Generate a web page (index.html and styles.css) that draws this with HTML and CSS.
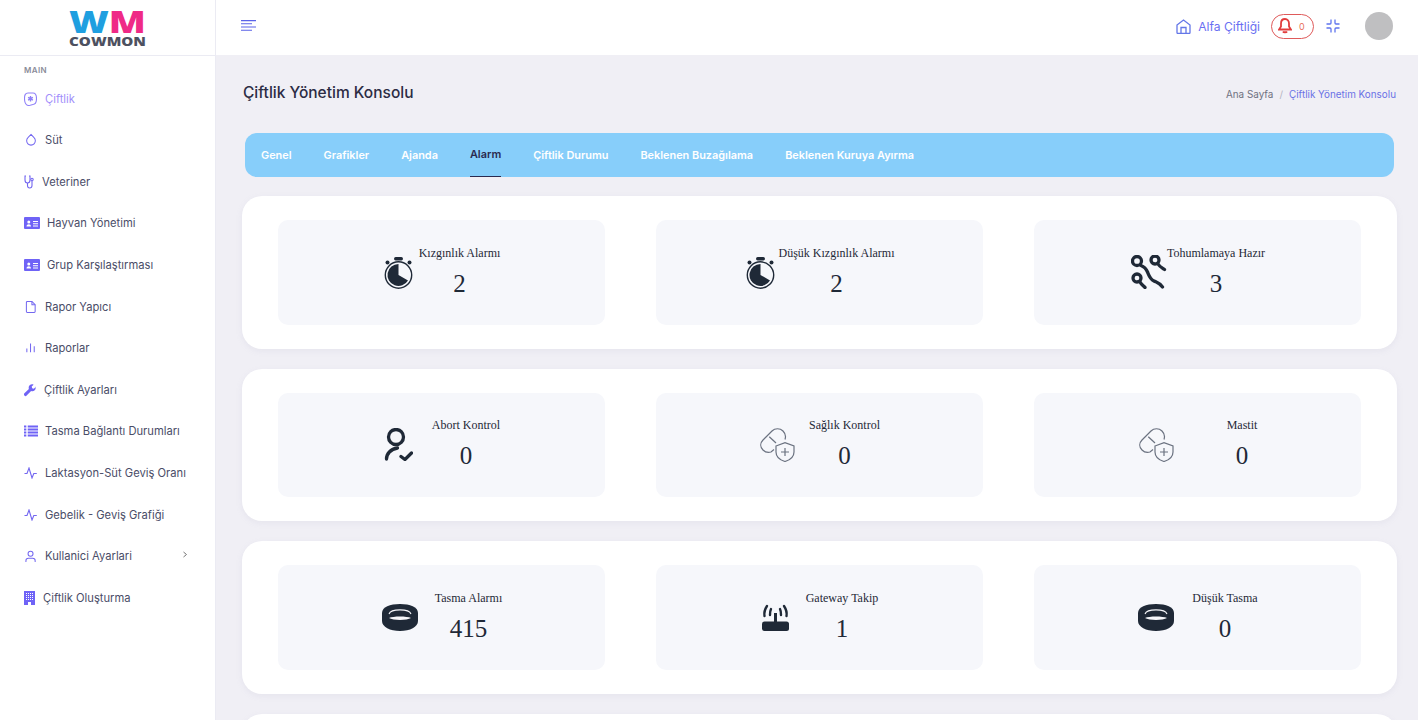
FILE: index.html
```html
<!DOCTYPE html>
<html lang="tr">
<head>
    <meta charset="UTF-8">
    <meta name="viewport" content="width=device-width, initial-scale=1.0">
    <title>Çiftlik Yönetim Konsolu</title>
    <link rel="stylesheet" href="styles.css">
</head>
<body>
<div class="wrapper">
    <!-- Sol menu -->
    <div class="sidebar">
        <div class="logo">
            <svg width="215" height="55" viewBox="0 0 215 55">
                <text class="logo-wm" x="69" y="33" textLength="77" lengthAdjust="spacingAndGlyphs"><tspan class="logo-w">W</tspan><tspan class="logo-m">M</tspan></text>
                <text class="logo-name" x="69" y="46" textLength="77" lengthAdjust="spacingAndGlyphs">COWMON</text>
            </svg>
        </div>
        <div class="menu-title">MAIN</div>
        <ul class="menu">
            <li class="active"><a href="#">
                <svg class="line" width="13" height="14" viewBox="0 0 13 14"><path d="M4 1h5c2.500 0 3.500 2 3.500 5.500s-1 6-3.500 6c-1.500 0-2.500 1-4.500 1-2.500 0-4-3-4-7S1.500 1 4 1z"/><path class="star" d="M6.500 4v5.600M4.100 5.400l4.800 2.800M8.900 5.400L4.100 8.200"/></svg>
                Çiftlik</a></li>
            <li><a href="#">
                <svg class="line icon-pad" width="13" height="14" viewBox="0 0 13 14"><path d="M6.500 1l3.300 3.500a4.700 4.700 0 1 1-6.600 0z"/></svg>
                Süt</a></li>
            <li><a href="#">
                <svg class="line" width="10" height="14" viewBox="0 0 10 14"><path d="M2 1H1v4c0 1.800 1 3 2.500 3S6 6.800 6 5V1H5"/><path d="M3.500 8v2.500c0 1.500 1 2.500 2.200 2.500S8 12 8 10.500V6"/><circle cx="8" cy="4.500" r="1.200"/></svg>
                Veteriner</a></li>
            <li><a href="#">
                <svg class="solid tight" width="16" height="13" viewBox="0 0 16 13"><path fill-rule="evenodd" d="M1 0h14a1 1 0 0 1 1 1v10a1 1 0 0 1-1 1H1a1 1 0 0 1-1-1V1a1 1 0 0 1 1-1zm1.500 9.500h4.500c0-1.500-1-2.300-2.200-2.300s-2.300.8-2.300 2.300zm2.300-3a1.500 1.500 0 1 0 0-3 1.500 1.500 0 0 0 0 3zM9 4v1h5V4zm0 2.300v1h5v-1zm0 2.300v1h5v-1z"/></svg>
                Hayvan Yönetimi</a></li>
            <li><a href="#">
                <svg class="solid tight" width="16" height="13" viewBox="0 0 16 13"><path fill-rule="evenodd" d="M1 0h14a1 1 0 0 1 1 1v10a1 1 0 0 1-1 1H1a1 1 0 0 1-1-1V1a1 1 0 0 1 1-1zm1.500 9.500h4.500c0-1.500-1-2.300-2.200-2.300s-2.300.8-2.300 2.300zm2.300-3a1.500 1.500 0 1 0 0-3 1.500 1.500 0 0 0 0 3zM9 4v1h5V4zm0 2.300v1h5v-1zm0 2.300v1h5v-1z"/></svg>
                Grup Karşılaştırması</a></li>
            <li><a href="#">
                <svg class="line icon-pad" width="13" height="14" viewBox="0 0 13 14"><path d="M2.500 1h5L11 4.500V12a1 1 0 0 1-1 1H2.500a1 1 0 0 1-1-1V2a1 1 0 0 1 1-1z"/><path d="M7.500 1v3.500H11"/></svg>
                Rapor Yapıcı</a></li>
            <li><a href="#">
                <svg class="line icon-pad" width="13" height="12" viewBox="0 0 13 12"><path d="M6 1v9.500M10 4v6.500M2 6.500v4"/></svg>
                Raporlar</a></li>
            <li><a href="#">
                <svg class="solid" width="12" height="14" viewBox="0 0 14 14"><path d="M13.700 3.300l-2.200 2.200-2-.5-.5-2L11.200.8C9.700 0 7.800.3 6.600 1.500 5.400 2.700 5.200 4.300 5.700 5.700L.5 10.900a1.800 1.800 0 0 0 2.600 2.600l5.200-5.200c1.400.5 3 .3 4.200-.9 1.200-1.200 1.500-3 .7-4.500z"/></svg>
                Çiftlik Ayarları</a></li>
            <li><a href="#">
                <svg class="solid tight" width="14" height="12" viewBox="0 0 15 12"><path d="M0 0h2.500v2.200H0zM4 0h11v2.200H4zM0 3.300h2.500v2.200H0zM4 3.300h11v2.200H4zM0 6.600h2.500v2.200H0zM4 6.600h11v2.200H4zM0 9.800h2.500V12H0zM4 9.800h11V12H4z"/></svg>
                Tasma Bağlantı Durumları</a></li>
            <li><a href="#">
                <svg class="line" width="13" height="12" viewBox="0 0 13 12"><path d="M.5 6.500h2.500l2-5.500 3 10 1.800-4.500h3"/></svg>
                Laktasyon-Süt Geviş Oranı</a></li>
            <li><a href="#">
                <svg class="line" width="13" height="12" viewBox="0 0 13 12"><path d="M.5 6.500h2.500l2-5.500 3 10 1.800-4.500h3"/></svg>
                Gebelik - Geviş Grafiği</a></li>
            <li><a href="#">
                <svg class="line icon-pad" width="13" height="13" viewBox="0 0 13 13"><circle cx="6" cy="3.500" r="2.700"/><path d="M1 12.500V11c0-1.500 1.200-2.500 2.700-2.500h4.600C9.800 8.500 11 9.500 11 11v1.500"/></svg>
                Kullanici Ayarlari
                <svg class="chevron" width="6" height="7" viewBox="0 0 6 7"><path d="M1.500 1l3 2.500-3 2.500"/></svg></a></li>
            <li><a href="#">
                <svg class="solid" width="11" height="14" viewBox="0 0 11 14"><path fill-rule="evenodd" d="M0 0h11v14H0zM2 2v1h1V2zm2 0v1h1V2zm2 0v1h1V2zm2 0v1h1V2zM2 4v1h1V4zm2 0v1h1V4zm2 0v1h1V4zm2 0v1h1V4zM2 6v1h1V6zm2 0v1h1V6zm2 0v1h1V6zm2 0v1h1V6zM2 8v1h1V8zm2 0v1h1V8zm2 0v1h1V8zm2 0v1h1V8zM4 11v3h3v-3z"/></svg>
                Çiftlik Oluşturma</a></li>
        </ul>
    </div>

    <div class="page">
        <!-- Ust bar -->
        <div class="topbar">
            <svg class="burger" width="16" height="12" viewBox="0 0 16 12"><path d="M0 .6h15M0 3.800h11M0 7h15M0 10.200h11"/></svg>
            <div class="top-right">
                <svg class="line home" width="15" height="15" viewBox="0 0 15 15"><path d="M1 6l6.500-5L14 6v7.500a1 1 0 0 1-1 1H2a1 1 0 0 1-1-1z"/><path d="M5 14.500V8.500h5v6"/></svg>
                <span class="farm-name">Alfa Çiftliği</span>
                <div class="bell-pill">
                    <svg width="14" height="16" viewBox="0 0 14 16"><path d="M7 1c-2.500 0-4 2-4 4.500v3L1 11.500h12l-2-3v-3C11 3 9.500 1 7 1z"/><path d="M5 13.500c.5 1 3.500 1 4 0"/></svg>
                    <span>0</span>
                </div>
                <svg class="line shrink" width="14" height="14" viewBox="0 0 14 14"><path d="M5 .5V4a1 1 0 0 1-1 1H.5M9 .5V4a1 1 0 0 0 1 1h3.500M5 13.500V10a1 1 0 0 0-1-1H.5M9 13.500V10a1 1 0 0 1 1-1h3.500"/></svg>
                <div class="avatar"></div>
            </div>
        </div>

        <div class="content">
            <div class="page-head">
                <h1>Çiftlik Yönetim Konsolu</h1>
                <div class="breadcrumb"><a href="#">Ana Sayfa</a><i>/</i><span>Çiftlik Yönetim Konsolu</span></div>
            </div>

            <div class="tabs">
                <a href="#">Genel</a>
                <a href="#">Grafikler</a>
                <a href="#">Ajanda</a>
                <a href="#" class="current">Alarm</a>
                <a href="#">Çiftlik Durumu</a>
                <a href="#">Beklenen Buzağılama</a>
                <a href="#">Beklenen Kuruya Ayırma</a>
            </div>

            <div class="card">
                <div class="stat gap-6">
                    <svg width="29" height="33" viewBox="0 0 29 33"><circle class="ring" cx="14.500" cy="19" r="13.200"/><path d="M14.500 19V8A11 11 0 1 0 24 24.500z"/><rect x="10" y="1" width="9" height="3.500" rx="1.700"/><circle cx="3.500" cy="6.500" r="2"/><circle cx="25.500" cy="6.500" r="2"/></svg>
                    <div class="stat-text"><span>Kızgınlık Alarmı</span><b>2</b></div>
                </div>
                <div class="stat gap-4">
                    <svg width="29" height="33" viewBox="0 0 29 33"><circle class="ring" cx="14.500" cy="19" r="13.200"/><path d="M14.500 19V8A11 11 0 1 0 24 24.500z"/><rect x="10" y="1" width="9" height="3.500" rx="1.700"/><circle cx="3.500" cy="6.500" r="2"/><circle cx="25.500" cy="6.500" r="2"/></svg>
                    <div class="stat-text"><span>Düşük Kızgınlık Alarmı</span><b>2</b></div>
                </div>
                <div class="stat gap-0">
                    <svg class="thick" width="36" height="34" viewBox="0 0 36 34"><circle cx="6" cy="6" r="4.500"/><circle cx="24" cy="5" r="4"/><circle cx="6" cy="23" r="4"/><path d="M10 10.500c4 1.500 5 3 6.500 6.500s2.500 7 6.500 9c3 1.500 5 1.500 8.500 6M27 9c1.500 2.500 3.500 3.500 6.500 5.500M9 27c1 2 3 3.500 5 5.500"/></svg>
                    <div class="stat-text"><span>Tohumlamaya Hazır</span><b>3</b></div>
                </div>
            </div>

            <div class="card">
                <div class="stat gap-19">
                    <svg class="thick" width="29" height="33" viewBox="0 0 29 33"><circle cx="12" cy="9" r="7.500"/><path d="M2.500 31c0-5 4-10 11-11"/><path d="M17 28.500l4 3 6.500-6.500"/></svg>
                    <div class="stat-text"><span>Abort Kontrol</span><b>0</b></div>
                </div>
                <div class="stat gap-14">
                    <svg class="thin" width="35" height="34" viewBox="0 0 35 34"><path d="M14 21.500l-3 2.500c-3 .8-6 0-8-2-3-3-3-7 0-10L12 3c3-3 8-3 11 0 2.500 2.500 3 5.500 2 8.500"/><path d="M9.300 8.700l6.700 6.300"/><path d="M16 18l9-3.300 9 3.300v6c0 4.500-4 8-9 9.500-5-1.500-9-5-9-9.500z"/><path d="M25 20v8M21 24h8"/></svg>
                    <div class="stat-text"><span>Sağlık Kontrol</span><b>0</b></div>
                </div>
                <div class="stat gap-53">
                    <svg class="thin" width="35" height="34" viewBox="0 0 35 34"><path d="M14 21.500l-3 2.500c-3 .8-6 0-8-2-3-3-3-7 0-10L12 3c3-3 8-3 11 0 2.500 2.500 3 5.500 2 8.500"/><path d="M9.300 8.700l6.700 6.300"/><path d="M16 18l9-3.300 9 3.300v6c0 4.500-4 8-9 9.500-5-1.500-9-5-9-9.500z"/><path d="M25 20v8M21 24h8"/></svg>
                    <div class="stat-text"><span>Mastit</span><b>0</b></div>
                </div>
            </div>

            <div class="card">
                <div class="stat gap-17">
                    <svg width="36" height="27" viewBox="0 0 36 27"><path d="M0 9C0 3 8 0 18 0s18 3 18 9v8c0 6-8 10-18 10S0 23 0 17z"/><path class="slit" d="M7 10C9 4.500 27 4.500 29 10"/><path class="fill-light" d="M7 14c4-2 18-2 22 0-4 2.500-18 2.500-22 0z"/></svg>
                    <div class="stat-text"><span>Tasma Alarmı</span><b>415</b></div>
                </div>
                <div class="stat gap-16">
                    <svg width="28" height="27" viewBox="0 0 28 27"><rect x="0" y="17.500" width="27" height="9.500" rx="2.500"/><rect x="12" y="9" width="3" height="9"/><path class="arc" d="M9 5c-1 2-1 4-1 6M18 5c1 2 1 4 1 6M5 2C3 5 2 9 2.500 12M22 2c2 3 3 7 2.500 10"/></svg>
                    <div class="stat-text"><span>Gateway Takip</span><b>1</b></div>
                </div>
                <div class="stat gap-18">
                    <svg width="36" height="27" viewBox="0 0 36 27"><path d="M0 9C0 3 8 0 18 0s18 3 18 9v8c0 6-8 10-18 10S0 23 0 17z"/><path class="slit" d="M7 10C9 4.500 27 4.500 29 10"/><path class="fill-light" d="M7 14c4-2 18-2 22 0-4 2.500-18 2.500-22 0z"/></svg>
                    <div class="stat-text"><span>Düşük Tasma</span><b>0</b></div>
                </div>
            </div>

            <div class="card"></div>
        </div>
    </div>
</div>
</body>
</html>
```

FILE: styles.css
```css
* {
    box-sizing: border-box;
}

body {
    font-family: Inter, Arial, sans-serif;
    margin: 0;
    padding: 0;
    background-color: #f0eff5;
    color: #495057;
}

a {
    text-decoration: none;
    color: inherit;
}

.wrapper {
    display: flex;
    height: 100vh;
    overflow: hidden;
}

/* Sol menu */
.sidebar {
    width: 216px;
    flex-shrink: 0;
    background-color: #fff;
    border-right: 1px solid #ebebf3;
}

.logo {
    height: 56px;
    border-bottom: 1px solid #ebebf3;
}

.logo svg {
    display: block;
}

.logo text {
    font-family: "Open Sans", sans-serif;
    font-weight: 800;
}

.logo-wm {
    font-size: 30px;
}

.logo-w {
    fill: #1f9fe0;
}

.logo-m {
    fill: #ef2a86;
}

.logo-name {
    font-size: 13px;
    fill: #4d5160;
}

.menu-title {
    font-size: 8px;
    font-weight: 600;
    line-height: 12px;
    letter-spacing: 0.4px;
    color: #8a8c99;
    padding: 8px 0 0 24px;
}

.menu {
    list-style: none;
    margin: 1.900px 0 0;
    padding: 0;
}

.menu li {
    height: 41.600px;
}

.menu li a {
    display: flex;
    align-items: center;
    height: 100%;
    padding: 0 24px;
    gap: 8px;
    font-size: 11.200px;
    color: #4a4d68;
}

.menu li.active a {
    color: #a28ffb;
}

.line {
    fill: none;
    stroke: #7367f0;
    stroke-width: 1.1;
    flex-shrink: 0;
}

.solid {
    fill: #6f63f6;
    flex-shrink: 0;
}

.tight {
    margin-right: -1px;
}

.active .line {
    stroke: #8f80f8;
}

.active .star {
    stroke-width: 1.400;
}

.icon-pad {
    padding-left: 1px;
}

.chevron {
    margin-left: auto;
    margin-right: 3px;
    margin-top: -4px;
    fill: none;
    stroke: #777;
    stroke-width: 1;
}

/* Ust bar */
.page {
    flex: 1;
    min-width: 0;
}

.topbar {
    height: 55px;
    background-color: #fff;
    display: flex;
    align-items: center;
    justify-content: space-between;
    padding: 0 25px 3px;
}

.burger {
    fill: none;
    stroke: #5b63e8;
    stroke-width: 1.1;
}

.top-right {
    display: flex;
    align-items: center;
}

.home {
    stroke: #6477e8;
    stroke-width: 1.300;
    margin-right: 7px;
}

.farm-name {
    font-size: 12.100px;
    color: #6a6ff2;
    margin-right: 11px;
}

.bell-pill {
    width: 43px;
    height: 25px;
    border: 1px solid #df5a5a;
    border-radius: 13px;
    display: flex;
    align-items: center;
    padding-left: 6px;
    margin-right: 12px;
    font-size: 9px;
    color: #e8705a;
}

.bell-pill svg {
    fill: none;
    stroke: #e23d3d;
    stroke-width: 1.8;
    margin-right: 7px;
}

.shrink {
    stroke: #5f74ee;
    stroke-width: 1.3;
    margin-right: 25px;
}

.avatar {
    width: 28px;
    height: 28px;
    border-radius: 50%;
    background-color: #bfbfc1;
}

/* Icerik */
.content {
    padding: 0 21px 0 26px;
}

.page-head {
    height: 78px;
    display: flex;
    align-items: center;
    justify-content: space-between;
}

.page-head h1 {
    margin: -4px 0 0 1px;
    font-size: 15.500px;
    font-weight: 500;
    color: #2c2c44;
}

.breadcrumb {
    font-size: 9.900px;
    color: #6f7180;
    margin-right: 1px;
}

.breadcrumb i {
    font-style: normal;
    color: #b5b5c0;
    margin: 0 6px;
}

.breadcrumb span {
    color: #6a72e6;
}

.tabs {
    margin: 0 3px 19px;
    height: 44px;
    background-color: #87cefa;
    border-radius: 12px;
    display: flex;
    padding: 0 0 0 16px;
    gap: 32px;
}

.tabs a {
    display: flex;
    align-items: center;
    padding-bottom: 1px;
    font-size: 10.900px;
    font-weight: 600;
    color: #fff;
}

.tabs a.current {
    color: #2a2a50;
    border-bottom: 1px solid #2a2a50;
}

.card {
    background-color: #fff;
    border-radius: 20px;
    margin-bottom: 20px;
    padding: 24px 36px;
    min-height: 152.500px;
    display: grid;
    grid-template-columns: repeat(3, 327px);
    justify-content: space-between;
    box-shadow: 0 2px 6px rgba(160, 160, 190, 0.12);
}

.stat {
    height: 104.500px;
    background-color: #f6f7fb;
    border-radius: 10px;
    display: flex;
    align-items: center;
    justify-content: center;
    padding-left: 1px;
}

.stat svg {
    fill: #1f2937;
    flex-shrink: 0;
}

.stat-text {
    font-family: "Liberation Serif", serif;
    color: #1f2937;
    text-align: center;
}

.stat-text span {
    display: block;
    font-size: 12px;
    line-height: 14px;
}

.stat-text b {
    display: block;
    font-size: 25px;
    font-weight: 400;
    line-height: 30px;
    margin-top: 9px;
}

.stat svg.thick {
    fill: none;
    stroke: #1f2937;
    stroke-width: 3.300;
    stroke-linecap: round;
}

.stat svg.thin {
    fill: none;
    stroke: #6b7280;
    stroke-width: 1.2;
}

.stat svg .slit {
    fill: none;
    stroke: #f6f7fb;
    stroke-width: 1.100;
}

.stat svg .fill-light {
    fill: #f6f7fb;
}

.stat svg .ring {
    fill: none;
    stroke: #1f2937;
    stroke-width: 1.400;
}

.stat svg .arc {
    fill: none;
    stroke: #1f2937;
    stroke-width: 2.400;
    stroke-linecap: round;
}

.gap-0 { gap: 0; }
.gap-4 { gap: 4px; }
.gap-6 { gap: 6px; }
.gap-14 { gap: 14px; }
.gap-16 { gap: 16px; }
.gap-17 { gap: 17px; }
.gap-18 { gap: 18px; }
.gap-19 { gap: 19px; }
.gap-53 { gap: 53px; }
```
